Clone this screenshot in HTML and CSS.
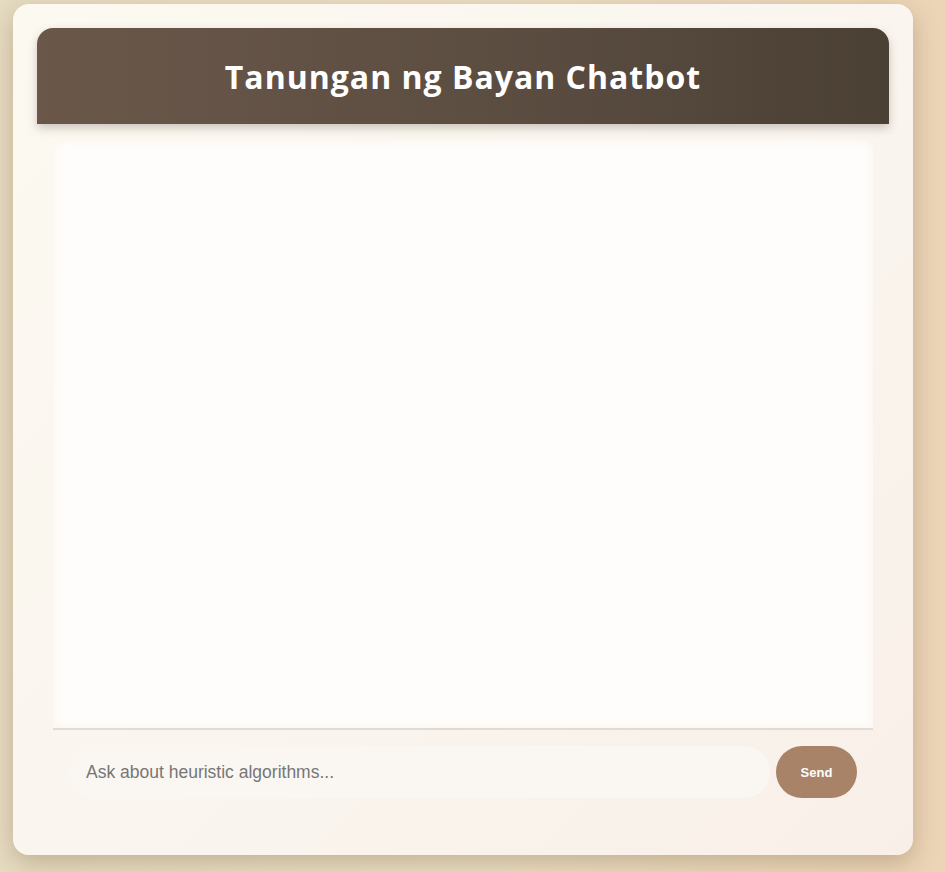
FILE: index.html
```html
<!DOCTYPE html>
<html lang="en">
<head>
<meta charset="utf-8">
<title>Tanungan ng Bayan Chatbot</title>
<link rel="stylesheet" href="styles.css">
</head>
<body>
  <div class="chat-container">
    <header class="chat-header">
      <h1>Tanungan ng Bayan Chatbot</h1>
    </header>
    <main class="chat-body">
      <div class="messages"></div>
    </main>
    <form class="input-row">
      <input class="chat-input" type="text" placeholder="Ask about heuristic algorithms...">
      <button class="send-btn" type="button">Send</button>
    </form>
  </div>
</body>
</html>
```

FILE: styles.css
```css
* { box-sizing: border-box; }

html, body {
  height: 100%;
}

body {
  margin: 0;
  padding: 4px 0 0 13px;
  background: linear-gradient(90deg, #e6dcc2 0%, #ebdfc6 50%, #ecd4b6 100%);
  font-family: "Liberation Sans", Arial, sans-serif;
  overflow: hidden;
}

.chat-container {
  width: 900px;
  height: 851px;
  padding: 24px 24px 0;
  border-radius: 16px;
  background: linear-gradient(135deg, #fcf9f1 0%, #faf6ef 50%, #f8efe8 100%);
  box-shadow: 0 8px 24px rgba(120, 95, 60, 0.35);
  display: flex;
  flex-direction: column;
}

.chat-header {
  height: 96px;
  border-radius: 16px 16px 0 0;
  background: linear-gradient(90deg, #6a574a 0%, #5d4e42 50%, #4b4034 100%);
  box-shadow: 0 4px 10px rgba(60, 45, 30, 0.25);
  display: flex;
  align-items: center;
  justify-content: center;
}

.chat-header h1 {
  margin: 0;
  color: #ffffff;
  font-family: "Open Sans", "Noto Sans", sans-serif;
  font-weight: 700;
  font-size: 32px;
  letter-spacing: 1px;
}

.chat-body {
  padding: 16px 16px 0;
}

.messages {
  height: 590px;
  background: #fffdfb;
  border-radius: 10px 10px 0 0;
  border-bottom: 2px solid #e2dbd3;
  box-shadow: inset 0 0 8px rgba(240, 232, 215, 0.45);
}

.input-row {
  margin: 16px 16px 0;
  padding: 0 16px;
  display: flex;
  gap: 6px;
  align-items: center;
}

.chat-input {
  flex: 1;
  height: 52px;
  border: none;
  outline: none;
  border-radius: 26px;
  padding: 0 17px;
  background: #faf7f2;
  font-family: "Liberation Sans", Arial, sans-serif;
  font-size: 17.5px;
  color: #333;
}

.chat-input::placeholder {
  color: #767676;
}

.send-btn {
  width: 81px;
  height: 52px;
  border: none;
  border-radius: 26px;
  background: #a88367;
  color: #ffffff;
  font-family: "Liberation Sans", Arial, sans-serif;
  font-weight: 700;
  font-size: 13px;
  cursor: pointer;
}
```
